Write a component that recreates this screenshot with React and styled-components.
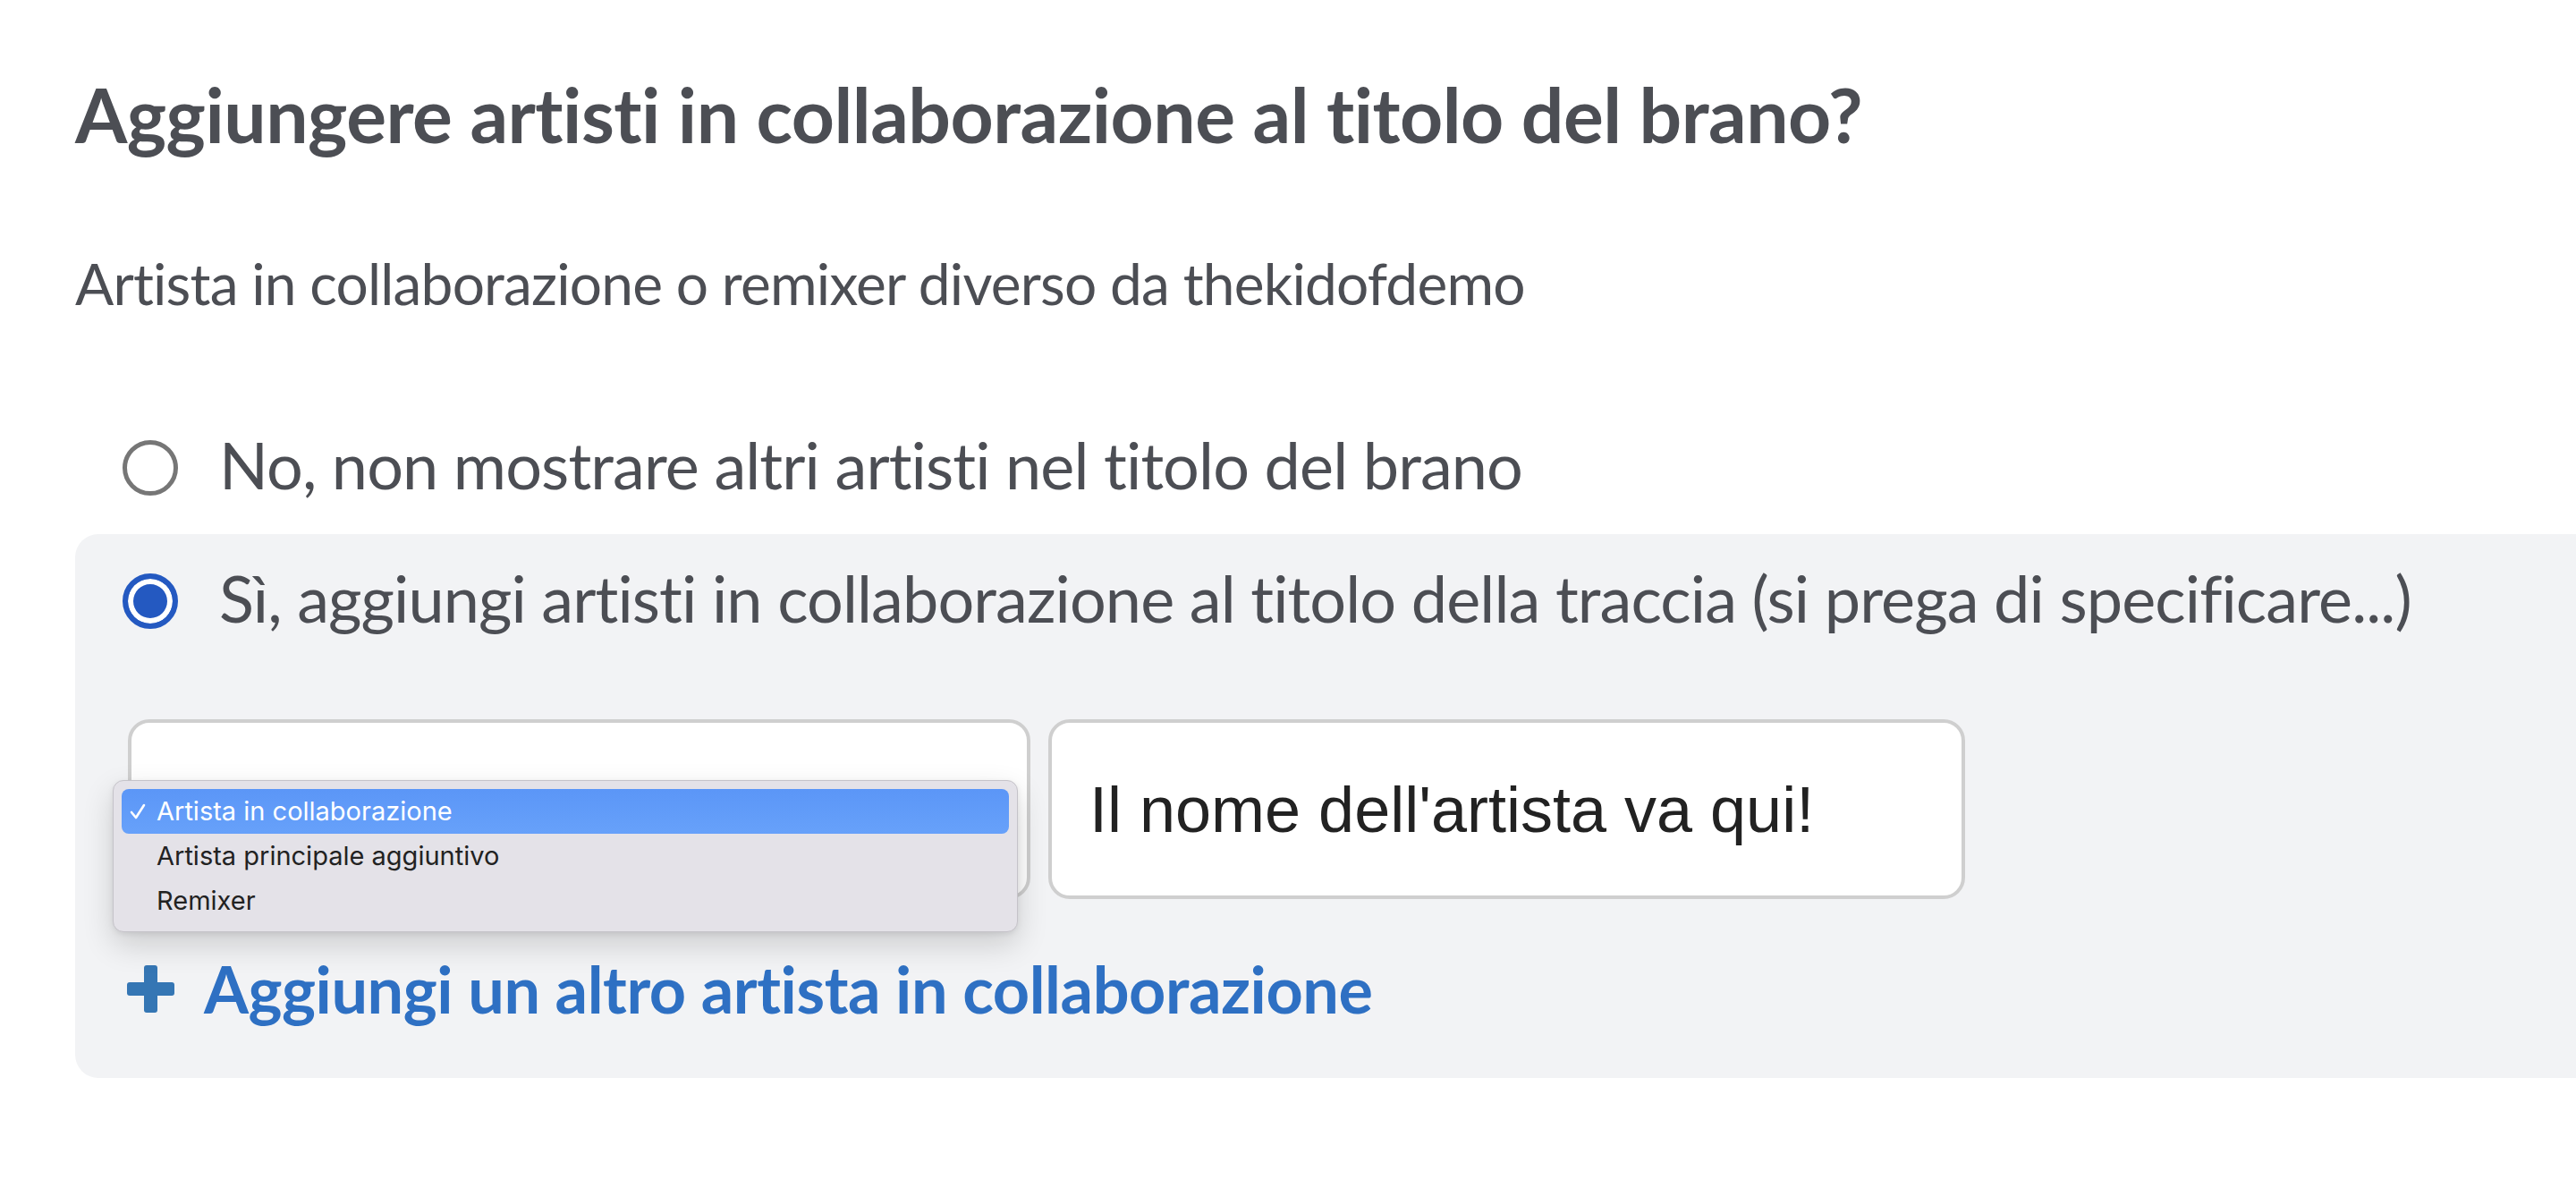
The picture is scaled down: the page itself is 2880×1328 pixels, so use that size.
import styled, { createGlobalStyle } from "styled-components";

const GlobalStyle = createGlobalStyle`
  html, body {
    margin: 0;
    padding: 0;
    background: #ffffff;
    overflow: hidden;
  }
  * {
    box-sizing: border-box;
  }
`;

const Page = styled.main`
  padding: 78px 0 0 84px;
  font-family: "Lato", "Open Sans", sans-serif;
  font-variant-ligatures: none;
  color: #4c4e54;
`;

const Heading = styled.h1`
  margin: 0;
  font-size: 84px;
  line-height: 1.2;
  font-weight: 700;
  letter-spacing: -0.5px;
`;

const Subtitle = styled.p`
  margin: 100px 0 0;
  font-size: 64px;
  line-height: 1.2;
  font-weight: 400;
  letter-spacing: -0.8px;
`;

const OptionRow = styled.label`
  display: flex;
  align-items: flex-start;
  gap: 46px;
  margin-top: ${({ $top }) => $top || 0}px;
  padding-left: ${({ $indent }) => $indent || 0}px;
  font-size: 72px;
  line-height: 1.2;
  letter-spacing: -0.9px;
  cursor: pointer;
`;

const Radio = styled.span`
  flex: none;
  width: 62px;
  height: 62px;
  margin-top: 16px;
  border-radius: 50%;
  border: ${({ $checked }) => ($checked ? "6px solid #2459c1" : "5px solid #767676")};
  background: ${({ $checked }) => ($checked ? "#2459c1" : "#ffffff")};
  box-shadow: ${({ $checked }) => ($checked ? "inset 0 0 0 6px #ffffff" : "none")};
`;

const Panel = styled.section`
  margin-top: 35px;
  padding: 28px 0 56px 53px;
  background: #f2f3f5;
  border-radius: 26px 0 0 26px;
`;

const FieldRow = styled.div`
  display: flex;
  gap: 20px;
  margin-top: 93px;
  padding-left: 6px;
`;

const SelectWrap = styled.div`
  position: relative;
  width: 1009px;
`;

const SelectBox = styled.div`
  height: 201px;
  background: #ffffff;
  border: 4px solid #cfcfcf;
  border-radius: 24px;
`;

const Menu = styled.ul`
  position: absolute;
  top: 68px;
  left: -17px;
  width: 1012px;
  margin: 0;
  padding: 9px;
  list-style: none;
  background: #e4e2e8;
  border: 1px solid #c5c3c9;
  border-radius: 12px;
  box-shadow: 0 14px 34px rgba(0, 0, 0, 0.16), 0 2px 6px rgba(0, 0, 0, 0.08);
  font-family: "Inter", "Liberation Sans", sans-serif;
  font-size: 29px;
  letter-spacing: 0;
  z-index: 2;
`;

const MenuItem = styled.li`
  display: flex;
  align-items: center;
  height: 50px;
  padding-left: 9px;
  border-radius: 8px;
  line-height: 50px;
  color: ${({ $active }) => ($active ? "#ffffff" : "#222222")};
  background: ${({ $active }) => ($active ? "linear-gradient(#5b96f7, #67a1fa)" : "transparent")};
`;

const CheckSlot = styled.span`
  flex: none;
  width: 30px;
  display: flex;
  align-items: center;
`;

const TextField = styled.input`
  width: 1025px;
  height: 201px;
  padding: 0 42px;
  background: #ffffff;
  border: 4px solid #cfcfcf;
  border-radius: 24px;
  font-family: "Liberation Sans", Arial, sans-serif;
  font-size: 72px;
  color: #222222;
  outline: none;
`;

const AddLink = styled.a`
  display: flex;
  align-items: center;
  gap: 33px;
  margin-top: 57px;
  padding-left: 5px;
  font-size: 72px;
  line-height: 1.2;
  font-weight: 700;
  letter-spacing: -0.45px;
  color: #2e70c3;
  text-decoration: none;
  cursor: pointer;
`;

const options = ["Artista in collaborazione", "Artista principale aggiuntivo", "Remixer"];

const Check = () => (
  <svg width="18" height="18" viewBox="0 0 18 18" fill="none">
    <polyline points="2,10 7,16 16,2" stroke="#ffffff" strokeWidth="2.6" strokeLinecap="round" strokeLinejoin="round" />
  </svg>
);

const PlusIcon = () => (
  <svg width="53" height="53" viewBox="0 0 53 53">
    <rect x="19" y="0" width="15" height="53" rx="3" fill="#3576b4" />
    <rect x="0" y="19" width="53" height="15" rx="3" fill="#3576b4" />
  </svg>
);

const App = () => {
  return (
    <>
      <GlobalStyle />
      <Page>
        <Heading>Aggiungere artisti in collaborazione al titolo del brano?</Heading>
        <Subtitle>Artista in collaborazione o remixer diverso da thekidofdemo</Subtitle>

        <OptionRow $top={120} $indent={53}>
          <Radio />
          No, non mostrare altri artisti nel titolo del brano
        </OptionRow>

        <Panel>
          <OptionRow>
            <Radio $checked />
            Sì, aggiungi artisti in collaborazione al titolo della traccia (si prega di specificare...)
          </OptionRow>

          <FieldRow>
            <SelectWrap>
              <SelectBox />
              <Menu>
                {options.map((opt, i) => (
                  <MenuItem key={opt} $active={i === 0}>
                    <CheckSlot>{i === 0 && <Check />}</CheckSlot>
                    {opt}
                  </MenuItem>
                ))}
              </Menu>
            </SelectWrap>
            <TextField readOnly value="Il nome dell'artista va qui!" />
          </FieldRow>

          <AddLink>
            <PlusIcon />
            Aggiungi un altro artista in collaborazione
          </AddLink>
        </Panel>
      </Page>
    </>
  );
};

export default App;
